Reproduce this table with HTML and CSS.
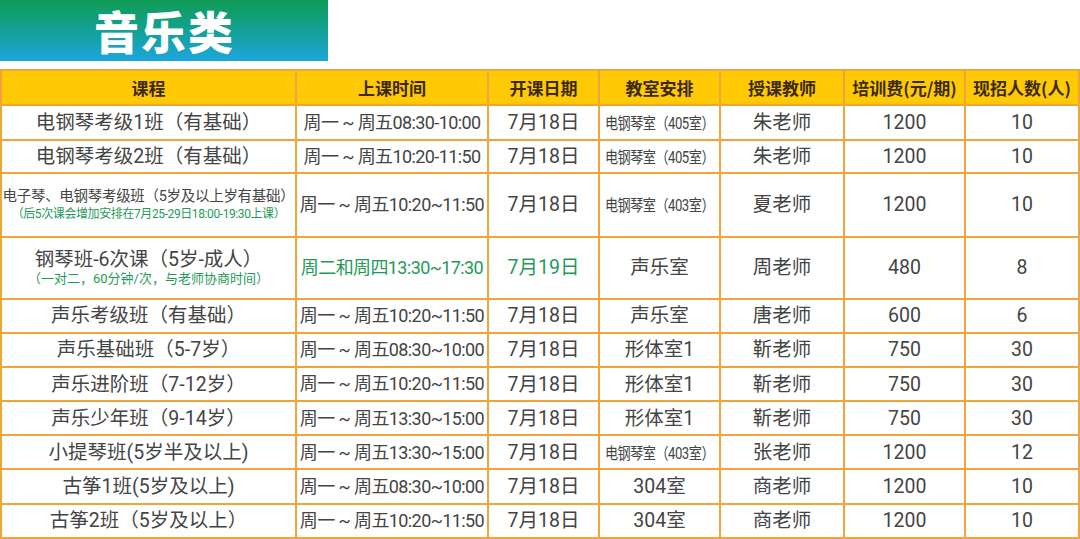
FILE: index.html
```html
<!DOCTYPE html>
<html lang="zh-CN">
<head>
<meta charset="utf-8">
<title>音乐类</title>
<link rel="stylesheet" href="styles.css">
</head>
<body>
<div class="banner"><span class="banner-title">音乐类</span></div>
<table class="schedule">
  <colgroup>
    <col class="c1"><col class="c2"><col class="c3"><col class="c4"><col class="c5"><col class="c6"><col class="c7">
  </colgroup>
  <thead>
    <tr class="head">
      <th>课程</th><th>上课时间</th><th>开课日期</th><th>教室安排</th><th>授课教师</th><th>培训费(元/期)</th><th>现招人数(人)</th>
    </tr>
  </thead>
  <tbody>
    <tr class="r35">
      <td class="course">电钢琴考级1班（有基础）</td><td class="time">周一 ~ 周五08:30-10:00</td><td>7月18日</td><td class="room"><span class="narrow">电钢琴室（405室）</span></td><td>朱老师</td><td class="num">1200</td><td class="num">10</td>
    </tr>
    <tr class="r33">
      <td class="course">电钢琴考级2班（有基础）</td><td class="time">周一 ~ 周五10:20-11:50</td><td>7月18日</td><td class="room"><span class="narrow">电钢琴室（405室）</span></td><td>朱老师</td><td class="num">1200</td><td class="num">10</td>
    </tr>
    <tr class="r64">
      <td class="course"><div class="l-mid">电子琴、电钢琴考级班（5岁及以上岁有基础）</div><div class="note">（后5次课会增加安排在7月25-29日18:00-19:30上课）</div></td><td class="time">周一 ~ 周五10:20~11:50</td><td>7月18日</td><td class="room"><span class="narrow">电钢琴室（403室）</span></td><td>夏老师</td><td class="num">1200</td><td class="num">10</td>
    </tr>
    <tr class="r62">
      <td class="course"><div>钢琴班-6次课（5岁-成人）</div><div class="note note2">（一对二，60分钟/次，与老师协商时间）</div></td><td class="time green">周二和周四13:30~17:30</td><td class="green">7月19日</td><td class="room">声乐室</td><td>周老师</td><td class="num">480</td><td class="num">8</td>
    </tr>
    <tr class="r34">
      <td class="course">声乐考级班（有基础）</td><td class="time">周一 ~ 周五10:20~11:50</td><td>7月18日</td><td class="room">声乐室</td><td>唐老师</td><td class="num">600</td><td class="num">6</td>
    </tr>
    <tr class="r34">
      <td class="course">声乐基础班（5-7岁）</td><td class="time">周一 ~ 周五08:30~10:00</td><td>7月18日</td><td class="room">形体室1</td><td>靳老师</td><td class="num">750</td><td class="num">30</td>
    </tr>
    <tr class="r34">
      <td class="course">声乐进阶班（7-12岁）</td><td class="time">周一 ~ 周五10:20~11:50</td><td>7月18日</td><td class="room">形体室1</td><td>靳老师</td><td class="num">750</td><td class="num">30</td>
    </tr>
    <tr class="r34">
      <td class="course">声乐少年班（9-14岁）</td><td class="time">周一 ~ 周五13:30~15:00</td><td>7月18日</td><td class="room">形体室1</td><td>靳老师</td><td class="num">750</td><td class="num">30</td>
    </tr>
    <tr class="r34">
      <td class="course">小提琴班(5岁半及以上)</td><td class="time">周一 ~ 周五13:30~15:00</td><td>7月18日</td><td class="room"><span class="narrow">电钢琴室（403室）</span></td><td>张老师</td><td class="num">1200</td><td class="num">12</td>
    </tr>
    <tr class="r34">
      <td class="course">古筝1班(5岁及以上)</td><td class="time">周一 ~ 周五08:30~10:00</td><td>7月18日</td><td class="room">304室</td><td>商老师</td><td class="num">1200</td><td class="num">10</td>
    </tr>
    <tr class="r34">
      <td class="course">古筝2班（5岁及以上）</td><td class="time">周一 ~ 周五10:20~11:50</td><td>7月18日</td><td class="room">304室</td><td>商老师</td><td class="num">1200</td><td class="num">10</td>
    </tr>
  </tbody>
</table>
</body>
</html>
```
FILE: styles.css
```css
html, body {
  margin: 0;
  padding: 0;
  background: #ffffff;
}
body {
  width: 1080px;
  height: 539px;
  overflow: hidden;
  font-family: Roboto, "Noto Sans CJK SC", sans-serif;
  color: #444444;
}
.banner {
  width: 328px;
  height: 61px;
  background: linear-gradient(180deg, #109c55 0%, #13a08e 45%, #1ca6de 100%);
  display: flex;
  align-items: center;
  padding-left: 94px;
  box-sizing: border-box;
  margin-bottom: 8px;
}
.banner-title {
  font-family: "Noto Sans CJK SC", sans-serif;
  font-weight: 900;
  font-size: 45px;
  color: #ffffff;
  letter-spacing: 2px;
  line-height: 1;
}
.schedule {
  border-collapse: collapse;
  table-layout: fixed;
  width: 1078px;
  border: 2px solid #f2a33a;
}
.c1 { width: 295px; }
.c2 { width: 192px; }
.c3 { width: 111px; }
.c4 { width: 121px; }
.c5 { width: 124px; }
.c6 { width: 121px; }
.c7 { width: 114px; }
.schedule th, .schedule td {
  border: 2px solid #f2a33a;
  text-align: center;
  vertical-align: middle;
  padding: 0;
  white-space: nowrap;
  overflow: hidden;
}
.head th {
  height: 33px;
  background: #ffc905;
  font-family: "Noto Sans CJK SC", sans-serif;
  font-weight: 700;
  font-size: 17px;
  color: #3b2a0c;
}
.schedule td {
  font-size: 19.5px;
  line-height: 1.2;
}
.r35 td { height: 33px; }
.r33 td { height: 31px; }
.r34 td { height: 32.1px; }
.r64 td { height: 62px; }
.r62 td { height: 60px; }
.time {
  font-size: 18px !important;
  letter-spacing: -0.6px;
}
.narrow {
  display: inline-block;
  font-size: 16px;
  letter-spacing: -0.6px;
  transform: scaleX(0.82);
  transform-origin: center;
  margin: 0 -14px;
}
.l-mid {
  font-size: 14.5px;
  line-height: 1.35;
  letter-spacing: -0.3px;
}
.note {
  font-size: 12px;
  color: #1f9a5b;
  line-height: 1.3;
  letter-spacing: -0.4px;
}
.note2 {
  font-size: 13px;
  letter-spacing: 0;
}
.green {
  color: #1f9a5b;
}
```
